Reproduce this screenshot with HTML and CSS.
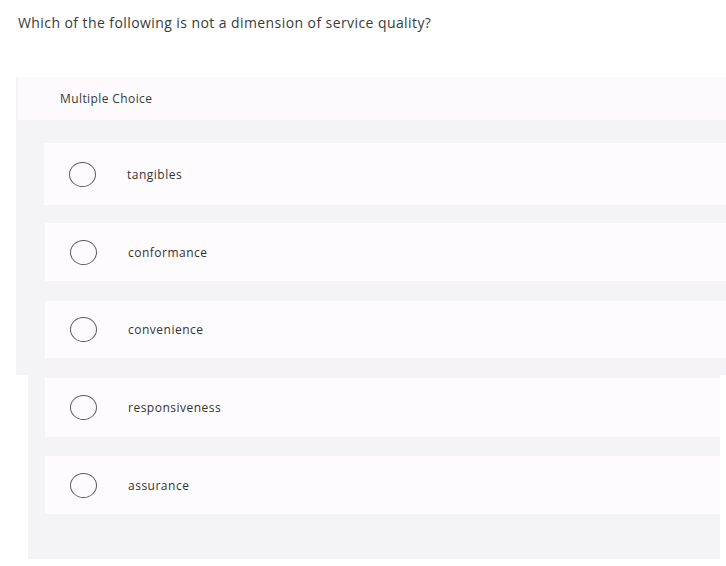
FILE: index.html
```html
<!DOCTYPE html>
<html>
<head>
<meta charset="utf-8">
<link rel="stylesheet" href="styles.css">
</head>
<body>
<div class="question">Which of the following is not a dimension of service quality?</div>
<div class="panel panel-top">
  <div class="header">Multiple Choice</div>
  <div class="options">
    <div class="card c1"><span class="radio"></span><span class="label">tangibles</span></div>
    <div class="card c2"><span class="radio"></span><span class="label">conformance</span></div>
    <div class="card c3"><span class="radio"></span><span class="label">convenience</span></div>
  </div>
</div>
<div class="panel panel-bottom">
  <div class="options">
    <div class="card c4"><span class="radio"></span><span class="label">responsiveness</span></div>
    <div class="card c5"><span class="radio"></span><span class="label">assurance</span></div>
  </div>
</div>
</body>
</html>
```
FILE: styles.css
```css
html, body {
  margin: 0;
  padding: 0;
  background: #ffffff;
}
body {
  font-family: "Open Sans", "Liberation Sans", sans-serif;
  color: #333333;
  width: 726px;
  height: 566px;
  overflow: hidden;
}
.question {
  padding: 14px 0 0 18px;
  height: 77px;
  box-sizing: border-box;
  font-size: 14px;
  letter-spacing: 0.42px;
  line-height: 18px;
  color: #3a3a3a;
}
.panel {
  background: #f4f4f6;
  box-sizing: border-box;
}
.panel-top {
  margin-left: 16px;
  height: 298px;
}
.header {
  height: 43px;
  background: #fcfafd;
  padding-left: 42px;
  margin-left: 2px;
  display: flex;
  align-items: center;
  font-size: 12px;
  letter-spacing: 0.4px;
  color: #3a3a3a;
}
.panel-top .options {
  padding-top: 23px;
  padding-left: 28px;
  display: flex;
  flex-direction: column;
  gap: 18px;
}
.card {
  background: #fdfbfd;
  display: flex;
  align-items: center;
  padding-left: 25px;
}
.c1 { height: 62px; }
.c2 { height: 58px; margin-left: 1px; }
.c3 { height: 57px; margin-left: 1px; margin-top: 2px; }
.c4 { height: 59px; }
.c5 { height: 58px; }
.radio {
  width: 27px;
  height: 25px;
  border: 1.3px solid #5a5a5a;
  border-radius: 50%;
  box-sizing: border-box;
  flex: none;
}
.label {
  margin-left: 31px;
  font-size: 12px;
  letter-spacing: 0.5px;
  color: #333333;
}
.panel-bottom {
  margin-left: 28px;
  width: 692px;
  height: 184px;
}
.panel-bottom .options {
  padding-top: 3px;
  padding-left: 17px;
  display: flex;
  flex-direction: column;
  gap: 19px;
}
```
